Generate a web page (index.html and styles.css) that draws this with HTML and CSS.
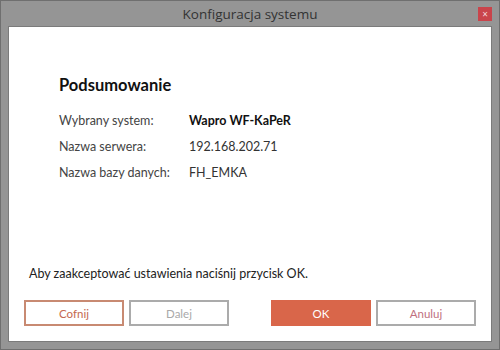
FILE: index.html
```html
<!DOCTYPE html>
<html lang="pl">
<head>
    <meta charset="UTF-8">
    <title>Konfiguracja systemu</title>
    <link rel="stylesheet" href="styles.css">
</head>
<body>

    <div class="window">
        <div class="titlebar">
            <span class="title">Konfiguracja systemu</span>
            <span class="close">&times;</span>
        </div>

        <div class="panel">
            <div class="summary">
                <h2>Podsumowanie</h2>
                <div class="row">
                    <span class="label">Wybrany system:</span>
                    <span class="value strong">Wapro WF-KaPeR</span>
                </div>
                <div class="row">
                    <span class="label">Nazwa serwera:</span>
                    <span class="value">192.168.202.71</span>
                </div>
                <div class="row">
                    <span class="label">Nazwa bazy danych:</span>
                    <span class="value">FH_EMKA</span>
                </div>
            </div>

            <p class="hint">Aby zaakceptować ustawienia naciśnij przycisk OK.</p>

            <div class="buttons">
                <div class="group">
                    <button class="btn btn-back">Cofnij</button>
                    <button class="btn btn-off">Dalej</button>
                </div>
                <div class="group">
                    <button class="btn btn-ok">OK</button>
                    <button class="btn btn-cancel">Anuluj</button>
                </div>
            </div>
        </div>
    </div>

</body>
</html>
```

FILE: styles.css
```css
html, body {
    margin: 0;
    padding: 0;
}
body {
    font-family: "Open Sans", "Noto Sans", sans-serif;
    color: #222;
}
.window {
    width: 500px;
    height: 350px;
    box-sizing: border-box;
    background-color: #959595;
    border: 1px solid #6f6f6f;
    display: flex;
    flex-direction: column;
}
.titlebar {
    height: 25px;
    display: flex;
    align-items: center;
    justify-content: center;
    position: relative;
}
.title {
    font-size: 13.5px;
    color: #333;
}
.close {
    position: absolute;
    right: 7px;
    top: 6px;
    width: 14px;
    height: 14px;
    background-color: #c9444b;
    color: #f3d7d8;
    font-size: 10px;
    line-height: 14px;
    text-align: center;
}
.panel {
    flex: 1;
    margin: 0 7px 7px;
    background-color: #fff;
    border: 1px solid #7b7b7b;
    display: flex;
    flex-direction: column;
}
.summary {
    padding: 48px 0 0 50px;
}
h2 {
    margin: 0 0 12px;
    font-family: "Lato", sans-serif;
    font-size: 16.5px;
    font-weight: bold;
    color: #111;
}
.row {
    display: flex;
    height: 26px;
    align-items: center;
    font-family: "Lato", sans-serif;
    font-size: 12.5px;
    color: #444;
}
.label {
    width: 130px;
}
.value {
    color: #333;
}
.strong {
    font-weight: bold;
    color: #111;
}
.hint {
    margin: auto 0 0 20px;
    font-family: "Lato", sans-serif;
    font-size: 12.5px;
    color: #222;
}
.buttons {
    display: flex;
    justify-content: space-between;
    padding: 19px 15px 15px;
}
.group {
    display: flex;
    gap: 5px;
}
.btn {
    width: 100px;
    height: 26px;
    box-sizing: border-box;
    background-color: #fff;
    border: 2px solid #ababab;
    font-family: "Lato", sans-serif;
    font-size: 11.5px;
    padding: 0;
}
.btn-back {
    border-color: #c88a72;
    color: #c4684f;
}
.btn-off {
    color: #a9a9a9;
}
.btn-ok {
    background-color: #d9664a;
    border-color: #d9664a;
    color: #fff;
}
.btn-cancel {
    color: #c07080;
}
```
